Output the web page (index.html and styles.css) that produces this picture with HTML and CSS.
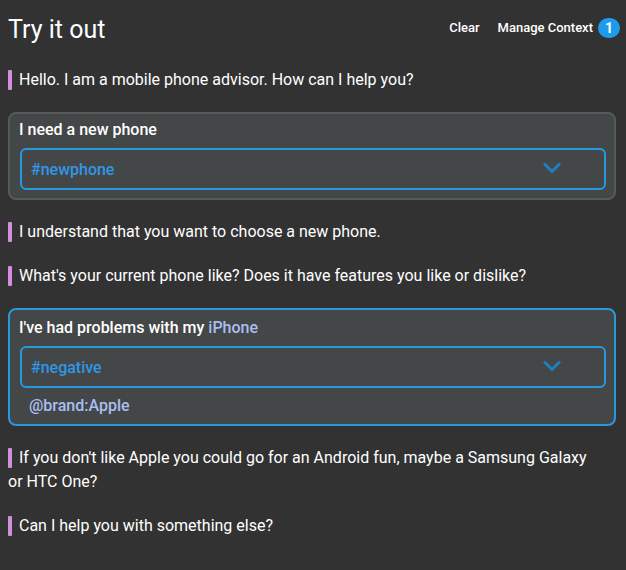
FILE: index.html
```html
<!DOCTYPE html>
<html lang="en">
<head>
  <meta charset="utf-8">
  <meta name="viewport" content="width=device-width, initial-scale=1">
  <title>Try it out</title>
  <link rel="stylesheet" href="styles.css">
</head>
<body>
  <header class="header">
    <h1 class="title">Try it out</h1>
    <div class="actions">
      <button class="action" type="button">Clear</button>
      <button class="action" type="button">Manage Context <span class="badge">1</span></button>
    </div>
  </header>
  <main class="chat">
    <p class="message">Hello. I am a mobile phone advisor. How can I help you?</p>
    <section class="card">
      <label class="utterance" for="intent-1">I need a new phone</label>
      <div class="picker">
        <select class="intent" id="intent-1"><option>#newphone</option></select>
        <svg class="chevron" viewBox="0 0 18 12" aria-hidden="true"><path d="M1 1.5 9 9.5 17 1.5"/></svg>
      </div>
    </section>
    <p class="message">I understand that you want to choose a new phone.</p>
    <p class="message">What's your current phone like? Does it have features you like or dislike?</p>
    <section class="card card-active">
      <label class="utterance" for="intent-2">I've had problems with my <span class="entity">iPhone</span></label>
      <div class="picker">
        <select class="intent" id="intent-2"><option>#negative</option></select>
        <svg class="chevron" viewBox="0 0 18 12" aria-hidden="true"><path d="M1 1.5 9 9.5 17 1.5"/></svg>
      </div>
      <p class="entity tag">@brand:Apple</p>
    </section>
    <p class="message">If you don't like Apple you could go for an Android fun, maybe a Samsung Galaxy or HTC One?</p>
    <p class="message">Can I help you with something else?</p>
  </main>
</body>
</html>
```
FILE: styles.css
```css
* {
  box-sizing: border-box;
}

body {
  margin: 0;
  padding: 8px 10px 32px 8px;
  background: #323232;
  color: #fff;
  font: 16px/24px Roboto, "Liberation Sans", sans-serif;
}

p {
  margin: 0;
}

.header {
  display: flex;
  align-items: center;
  justify-content: space-between;
  height: 40px;
  margin: 0 -4px 20px 0;
}

.title {
  margin: 0;
  padding-top: 4px;
  font-size: 25px;
  font-weight: 400;
  line-height: 32px;
}

.actions {
  display: flex;
  gap: 18px;
}

.action {
  display: flex;
  align-items: center;
  gap: 5px;
  padding: 0;
  border: 0;
  background: none;
  color: inherit;
  font: 500 13px/20px Roboto, "Liberation Sans", sans-serif;
}

.badge {
  width: 22px;
  border-radius: 10px;
  background: #1d9bec;
  font-size: 14px;
  font-weight: 700;
  text-align: center;
}

.chat {
  display: flex;
  flex-direction: column;
  gap: 20px;
}

.message::before {
  content: "";
  display: inline-block;
  width: 4px;
  height: 20px;
  margin-right: 7px;
  border-radius: 1px;
  background: #d18fdc;
  vertical-align: -5px;
}

.message {
  padding-right: 16px;
  line-height: 24px;
}

.card {
  display: flex;
  flex-direction: column;
  gap: 6px;
  padding: 4px 8px 8px 9px;
  border: 2px solid #565a5b;
  border-radius: 8px;
  background: #444747;
}

.card-active {
  padding: 6px 8px 6px 9px;
  border-color: #2898e0;
}

.utterance,
.tag {
  font-weight: 500;
}

.entity {
  color: #a9bff0;
}

.tag {
  padding-left: 10px;
}

.picker {
  position: relative;
  margin-left: 1px;
}

.intent {
  display: block;
  width: 100%;
  height: 42px;
  padding: 2px 9px 0;
  appearance: none;
  border: 2px solid #2898e0;
  border-radius: 6px;
  background: transparent;
  color: #3096e8;
  font: inherit;
  font-weight: 500;
}

.chevron {
  position: absolute;
  top: 14px;
  right: 45px;
  width: 18px;
  height: 12px;
  fill: none;
  stroke: #1f7fc0;
  stroke-width: 3;
  pointer-events: none;
}
```
